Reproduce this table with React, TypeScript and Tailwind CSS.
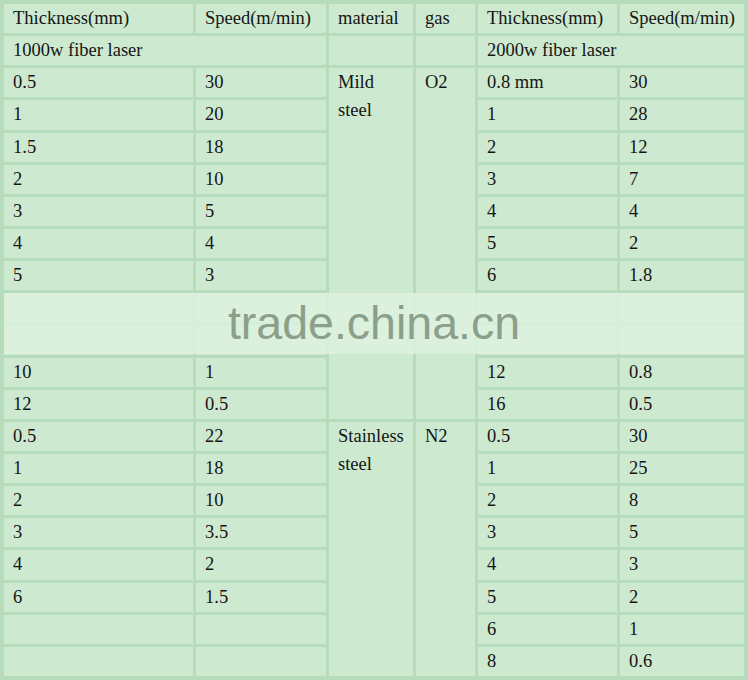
const LEFT: [string, string][] = [
  ["0.5", "30"],
  ["1", "20"],
  ["1.5", "18"],
  ["2", "10"],
  ["3", "5"],
  ["4", "4"],
  ["5", "3"],
  ["", ""],
  ["", ""],
  ["10", "1"],
  ["12", "0.5"],
  ["0.5", "22"],
  ["1", "18"],
  ["2", "10"],
  ["3", "3.5"],
  ["4", "2"],
  ["6", "1.5"],
  ["", ""],
  ["", ""],
];

const RIGHT: [string, string][] = [
  ["0.8 mm", "30"],
  ["1", "28"],
  ["2", "12"],
  ["3", "7"],
  ["4", "4"],
  ["5", "2"],
  ["6", "1.8"],
  ["", ""],
  ["", ""],
  ["12", "0.8"],
  ["16", "0.5"],
  ["0.5", "30"],
  ["1", "25"],
  ["2", "8"],
  ["3", "5"],
  ["4", "3"],
  ["5", "2"],
  ["6", "1"],
  ["8", "0.6"],
];

function Cell({ children, className = "" }: { children?: React.ReactNode; className?: string }) {
  return (
    <div className={`bg-[#cde9cf] pl-[9px] leading-[29px] text-[#151515] overflow-hidden ${className}`}>
      {children}
    </div>
  );
}

export default function App() {
  const rows = [];
  for (let i = 0; i < LEFT.length; i++) {
    const [a, b] = LEFT[i];
    const [c, d] = RIGHT[i];
    rows.push(<Cell key={`a${i}`}>{a}</Cell>);
    rows.push(<Cell key={`b${i}`}>{b}</Cell>);
    if (i === 0) {
      rows.push(
        <Cell key="mild" className="row-span-11 !leading-[28px]">
          Mild
          <br />
          steel
        </Cell>
      );
      rows.push(
        <Cell key="o2" className="row-span-11">
          O2
        </Cell>
      );
    }
    if (i === 11) {
      rows.push(
        <Cell key="ss" className="row-span-8 !leading-[28px]">
          Stainless
          <br />
          steel
        </Cell>
      );
      rows.push(
        <Cell key="n2" className="row-span-8">
          N2
        </Cell>
      );
    }
    rows.push(<Cell key={`c${i}`}>{c}</Cell>);
    rows.push(<Cell key={`d${i}`}>{d}</Cell>);
  }

  return (
    <div className="relative w-[748px] h-[680px] bg-[#b6dcbc] p-[4px] text-[18.5px] font-['Liberation_Serif','Times_New_Roman',serif]">
      <div className="grid h-full grid-cols-[189px_130px_84px_59px_139px_124px] grid-rows-[repeat(21,minmax(0,1fr))] gap-[3px]">
        <Cell>Thickness(mm)</Cell>
        <Cell>Speed(m/min)</Cell>
        <Cell>material</Cell>
        <Cell>gas</Cell>
        <Cell>Thickness(mm)</Cell>
        <Cell>Speed(m/min)</Cell>

        <Cell className="col-span-2">1000w fiber laser</Cell>
        <Cell />
        <Cell />
        <Cell className="col-span-2">2000w fiber laser</Cell>

        {rows}
      </div>

      {/* watermark band */}
      <div className="absolute left-[4px] right-[4px] top-[293px] h-[61px] bg-[#e0f2e0]/80 flex items-center justify-center">
        <span className="text-[46.5px] leading-none text-[#8ba08b] font-['Liberation_Sans',Arial,sans-serif]">
          trade.china.cn
        </span>
      </div>
    </div>
  );
}
